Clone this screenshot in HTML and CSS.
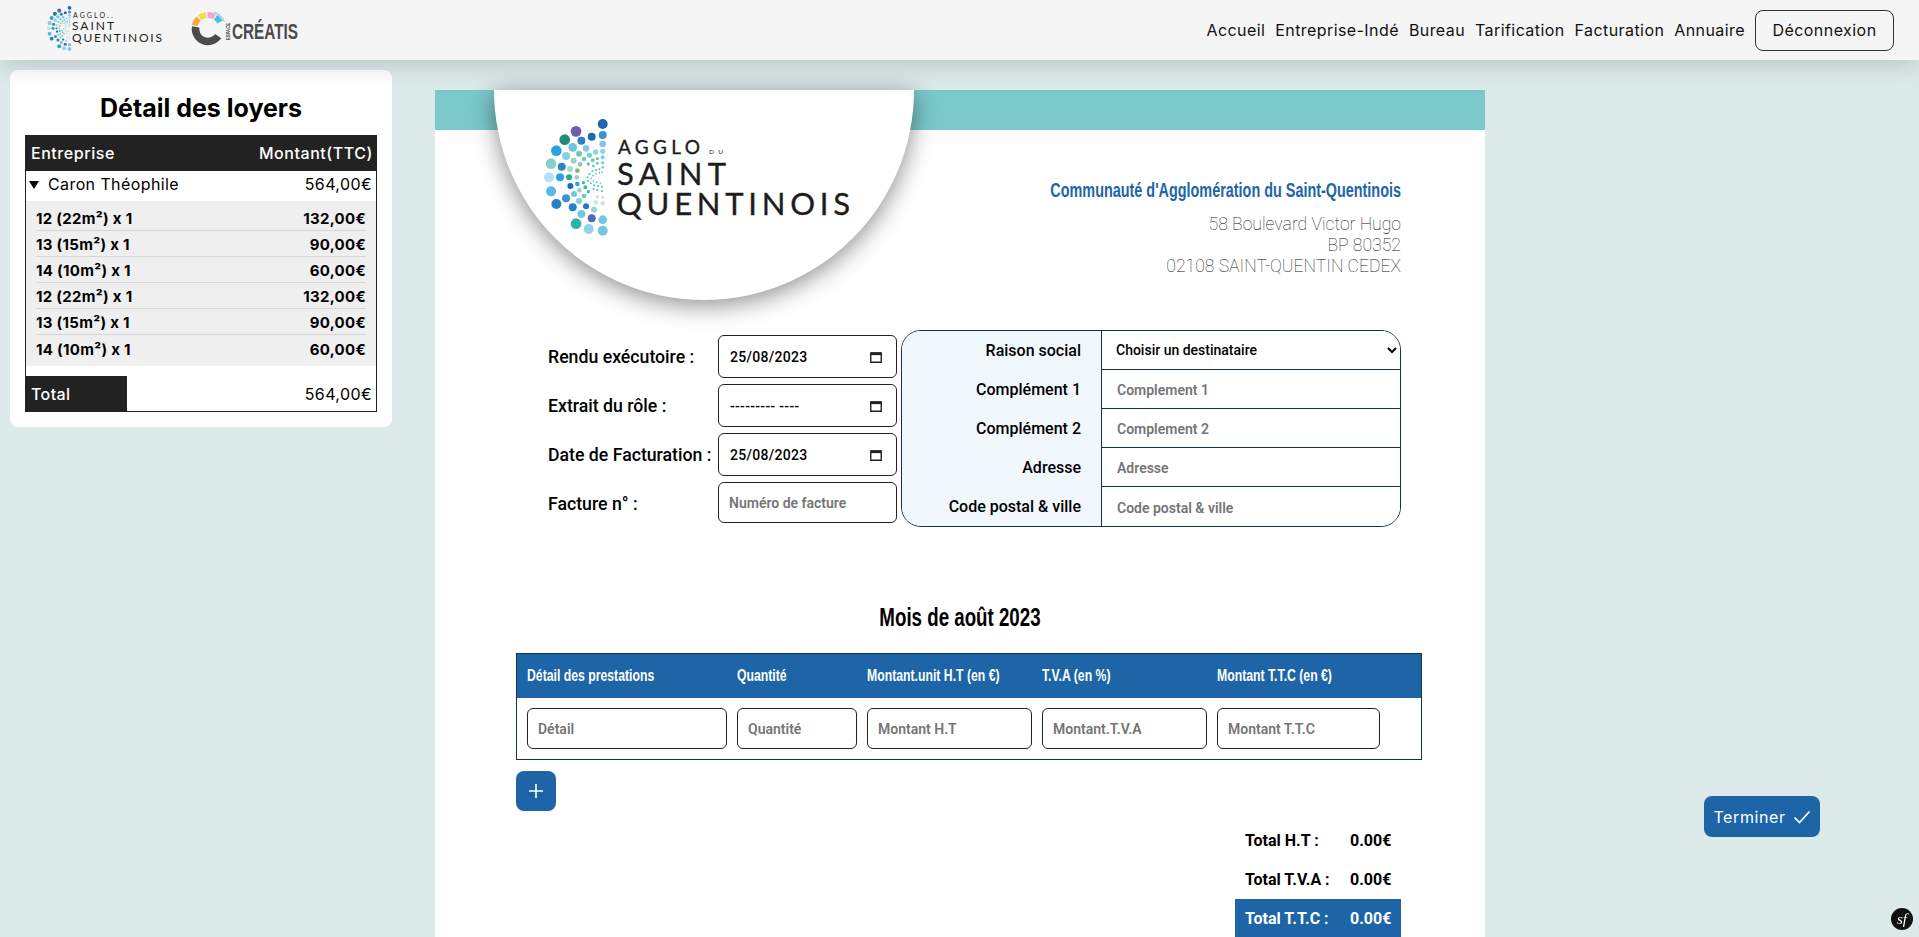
FILE: index.html
```html
<!DOCTYPE html>
<html lang="fr">
<head>
<meta charset="utf-8">
<title>Facturation</title>
<link rel="stylesheet" href="styles.css">
</head>
<body>
<svg class="defs" width="0" height="0" aria-hidden="true">
  <symbol id="dots" viewBox="185 110 200 366">
    <circle cx="368" cy="132" r="15" fill="#1d68b0"/><circle cx="368" cy="165" r="12" fill="#3d8fcf"/><circle cx="368" cy="192" r="10" fill="#8fc0e8"/><circle cx="368" cy="214" r="8" fill="#8fd3ee"/><circle cx="368" cy="232" r="6" fill="#7cd0c8"/><circle cx="368" cy="248" r="5" fill="#7cd0c8"/><circle cx="368" cy="262" r="4" fill="#7cd0c8"/>
    <circle cx="288" cy="154" r="16" fill="#6f5fae"/><circle cx="335" cy="170" r="12" fill="#1d6ab0"/><circle cx="304" cy="182" r="12" fill="#2c80c6"/><circle cx="254" cy="179" r="16" fill="#1f8a78"/><circle cx="278" cy="202" r="13" fill="#6cc6dc"/><circle cx="318" cy="205" r="10" fill="#8cc4ea"/><circle cx="347" cy="216" r="8" fill="#8dd6ea"/><circle cx="229" cy="212" r="16" fill="#2ba3e2"/><circle cx="297" cy="221" r="9" fill="#6cc9b6"/><circle cx="258" cy="228" r="12" fill="#87cfe8"/><circle cx="328" cy="226" r="8" fill="#7fd0d4"/><circle cx="312" cy="237" r="7" fill="#6fcab8"/><circle cx="352" cy="236" r="5" fill="#6fcab8"/><circle cx="281" cy="242" r="9" fill="#9ad4c0"/><circle cx="338" cy="241" r="6" fill="#6fcab8"/><circle cx="213" cy="251" r="16" fill="#86cfcb"/><circle cx="300" cy="253" r="7" fill="#80cca8"/><circle cx="245" cy="260" r="12" fill="#2f86c4"/><circle cx="325" cy="252" r="5" fill="#5fc4b8"/><circle cx="352" cy="250" r="4" fill="#5fc4b8"/><circle cx="270" cy="267" r="9" fill="#a8dcc8"/><circle cx="292" cy="272" r="7" fill="#7cc060"/><circle cx="340" cy="258" r="4" fill="#5fc4b8"/>
    <circle cx="207" cy="292" r="15" fill="#b8e0f8"/><circle cx="240" cy="292" r="12" fill="#2ba3e2"/><circle cx="267" cy="292" r="9" fill="#2fa88e"/><circle cx="290" cy="292" r="7" fill="#8fd0e8"/><circle cx="271" cy="318" r="9" fill="#1f6ab8"/><circle cx="292" cy="312" r="7" fill="#2ba3e2"/><circle cx="310" cy="308" r="5" fill="#3db8a8"/><circle cx="213" cy="334" r="15" fill="#5cb8e8"/><circle cx="258" cy="355" r="12" fill="#4090d0"/><circle cx="282" cy="342" r="9" fill="#70c8e8"/><circle cx="298" cy="331" r="7" fill="#9ad4c0"/><circle cx="316" cy="322" r="6" fill="#3db8a8"/><circle cx="229" cy="372" r="15" fill="#2880c0"/><circle cx="297" cy="363" r="9" fill="#80d0e0"/><circle cx="312" cy="348" r="7" fill="#70c8b8"/><circle cx="325" cy="335" r="5" fill="#3db8a8"/><circle cx="278" cy="382" r="12" fill="#2880c8"/><circle cx="318" cy="379" r="9" fill="#2878c0"/><circle cx="342" cy="389" r="9" fill="#90d8e8"/><circle cx="368" cy="370" r="7" fill="#c8e8e0"/><circle cx="347" cy="367" r="7" fill="#c8e8e0"/><circle cx="368" cy="352" r="5" fill="#c8e8e0"/><circle cx="352" cy="350" r="5" fill="#c8e8e0"/><circle cx="304" cy="402" r="12" fill="#70c8e0"/><circle cx="335" cy="415" r="12" fill="#5068b8"/><circle cx="368" cy="419" r="13" fill="#70c8e0"/><circle cx="288" cy="431" r="16" fill="#2cb4a0"/><circle cx="326" cy="447" r="15" fill="#90d4ec"/><circle cx="368" cy="452" r="15" fill="#70c8e0"/>
    <g fill="#45bfc0"><circle cx="358" cy="268" r="3"/><circle cx="348" cy="270" r="3"/><circle cx="337" cy="274" r="3"/><circle cx="328" cy="282" r="3"/><circle cx="322" cy="292" r="3"/><circle cx="324" cy="302" r="3"/><circle cx="332" cy="310" r="3"/><circle cx="342" cy="316" r="3"/><circle cx="354" cy="318" r="3"/><circle cx="366" cy="320" r="3"/><circle cx="358" cy="278" r="2.5"/><circle cx="348" cy="281" r="2.5"/><circle cx="339" cy="287" r="2.5"/><circle cx="334" cy="295" r="2.5"/><circle cx="340" cy="303" r="2.5"/><circle cx="350" cy="307" r="2.5"/><circle cx="361" cy="309" r="2.5"/><circle cx="366" cy="276" r="2.5"/><circle cx="352" cy="330" r="3"/><circle cx="340" cy="328" r="3"/><circle cx="366" cy="334" r="3"/></g>
  </symbol>
</svg>

<header class="topbar">
  <div class="brands">
    <svg class="brand-agglo" viewBox="0 0 118 50" role="img">
      <use href="#dots" x="0" y="0" width="25.700" height="47"/>
      <text class="lg-text" x="27" y="13.300" font-size="7" textLength="32" lengthAdjust="spacing">AGGLO</text>
      <text class="lg-text" x="61" y="13.300" font-size="2.600" textLength="6" lengthAdjust="spacing">DU</text>
      <text class="lg-text" x="26" y="25" font-size="12" textLength="42" lengthAdjust="spacing">SAINT</text>
      <text class="lg-text" x="26" y="36.700" font-size="12" textLength="90" lengthAdjust="spacing">QUENTINOIS</text>
    </svg>
    <svg class="brand-creatis" viewBox="0 0 110 44" role="img">
      <path d="M24.200 4.100A18 18 0 0 1 34.300 13.400" fill="none" stroke="#57c2dc" stroke-width="1"/>
      <path d="M4.500 17.400A14 14 0 0 1 8.600 10.600" fill="none" stroke="#f3a93c" stroke-width="6"/>
      <path d="M9.600 9.800A14 14 0 0 1 16.300 7.100" fill="none" stroke="#f7d84e" stroke-width="6"/>
      <path d="M17.500 7A14 14 0 0 1 24.600 8.600" fill="none" stroke="#f0a8c8" stroke-width="6"/>
      <path d="M25.600 9.300A14 14 0 0 1 30.100 14" fill="none" stroke="#45bfdf" stroke-width="6"/>
      <path d="M5.700 18.800A12.500 12.500 0 0 0 28.200 28.200" fill="none" stroke="#4b4b4e" stroke-width="7.500"/>
      <text class="cr-esp" transform="translate(40 32) rotate(-90)" textLength="17" lengthAdjust="spacingAndGlyphs">ESPACE</text>
      <text class="cr-name" x="42" y="30.500" textLength="66" lengthAdjust="spacingAndGlyphs">CRÉATIS</text>
    </svg>
  </div>
  <nav class="nav">
    <a class="nav-link">Accueil</a>
    <a class="nav-link">Entreprise-Indé</a>
    <a class="nav-link">Bureau</a>
    <a class="nav-link">Tarification</a>
    <a class="nav-link">Facturation</a>
    <a class="nav-link">Annuaire</a>
    <button class="logout" type="button">Déconnexion</button>
  </nav>
</header>

<div class="page">
  <aside class="card">
    <h2 class="card-title">Détail des loyers</h2>
    <div class="rent">
      <div class="rent-head"><span>Entreprise</span><span>Montant(TTC)</span></div>
      <div class="rent-company"><span class="rent-name"><i class="caret"></i>Caron Théophile</span><span>564,00€</span></div>
      <div class="rent-lines">
        <div class="rent-line"><span>12 (22m²) x 1</span><span>132,00€</span></div>
        <div class="rent-line"><span>13 (15m²) x 1</span><span>90,00€</span></div>
        <div class="rent-line"><span>14 (10m²) x 1</span><span>60,00€</span></div>
        <div class="rent-line"><span>12 (22m²) x 1</span><span>132,00€</span></div>
        <div class="rent-line"><span>13 (15m²) x 1</span><span>90,00€</span></div>
        <div class="rent-line"><span>14 (10m²) x 1</span><span>60,00€</span></div>
      </div>
      <div class="rent-total"><span class="rent-total-label">Total</span><span class="rent-total-value">564,00€</span></div>
    </div>
  </aside>

  <main class="sheet">
    <div class="banner"></div>
    <div class="disc">
      <svg class="disc-logo" viewBox="0 0 306 118" role="img">
        <use href="#dots" x="-2.300" y="-2.300" width="66.700" height="122"/>
        <text class="lg-text lg-big" x="74" y="35" font-size="19" textLength="82" lengthAdjust="spacing">AGGLO</text>
        <text class="lg-text" x="165" y="35" font-size="6.500" textLength="14" lengthAdjust="spacing">DU</text>
        <text class="lg-text lg-big" x="73" y="66" font-size="31" textLength="109" lengthAdjust="spacing">SAINT</text>
        <text class="lg-text lg-big" x="73" y="96" font-size="31" textLength="233" lengthAdjust="spacing">QUENTINOIS</text>
      </svg>
    </div>

    <section class="company">
      <h3 class="company-name"><span class="cond cond-right">Communauté d'Agglomération du Saint-Quentinois</span></h3>
      <p class="company-addr">58 Boulevard Victor Hugo<br>BP 80352<br>02108 SAINT-QUENTIN CEDEX</p>
    </section>

    <section class="form-row">
      <div class="meta">
        <label class="meta-label">Rendu exécutoire :</label>
        <div class="field"><input class="field-input date-text" type="text" value="25/08/2023"><svg class="cal" viewBox="0 0 12 12"><path d="M1.500 3.500h9v7h-9z" fill="none" stroke="#222" stroke-width="1.200"/><path d="M1 1.800h10v2.600h-10z" fill="#222"/></svg></div>
        <label class="meta-label">Extrait du rôle :</label>
        <div class="field"><input class="field-input date-text" type="text" value="--------- ----"><svg class="cal" viewBox="0 0 12 12"><path d="M1.500 3.500h9v7h-9z" fill="none" stroke="#222" stroke-width="1.200"/><path d="M1 1.800h10v2.600h-10z" fill="#222"/></svg></div>
        <label class="meta-label">Date de Facturation :</label>
        <div class="field"><input class="field-input date-text" type="text" value="25/08/2023"><svg class="cal" viewBox="0 0 12 12"><path d="M1.500 3.500h9v7h-9z" fill="none" stroke="#222" stroke-width="1.200"/><path d="M1 1.800h10v2.600h-10z" fill="#222"/></svg></div>
        <label class="meta-label">Facture n° :</label>
        <div class="field field-last"><input class="field-input" type="text" placeholder="Numéro de facture"></div>
      </div>
      <div class="recipient">
        <label class="rc-label">Raison social</label>
        <div class="rc-cell"><select class="rc-select"><option>Choisir un destinataire</option></select></div>
        <label class="rc-label">Complément 1</label>
        <div class="rc-cell"><input class="rc-input" type="text" placeholder="Complement 1"></div>
        <label class="rc-label">Complément 2</label>
        <div class="rc-cell"><input class="rc-input" type="text" placeholder="Complement 2"></div>
        <label class="rc-label">Adresse</label>
        <div class="rc-cell"><input class="rc-input" type="text" placeholder="Adresse"></div>
        <label class="rc-label">Code postal &amp; ville</label>
        <div class="rc-cell"><input class="rc-input" type="text" placeholder="Code postal &amp; ville"></div>
      </div>
    </section>

    <h2 class="month"><span class="cond cond-center">Mois de août 2023</span></h2>

    <section class="lines">
      <div class="lines-grid lines-head">
        <span class="cond cond-left">Détail des prestations</span><span class="cond cond-left">Quantité</span><span class="cond cond-left">Montant.unit H.T (en €)</span><span class="cond cond-left">T.V.A (en %)</span><span class="cond cond-left">Montant T.T.C (en €)</span>
      </div>
      <div class="lines-grid lines-row">
        <input class="field-input" type="text" placeholder="Détail">
        <input class="field-input" type="text" placeholder="Quantité">
        <input class="field-input" type="text" placeholder="Montant H.T">
        <input class="field-input" type="text" placeholder="Montant.T.V.A">
        <input class="field-input" type="text" placeholder="Montant T.T.C">
      </div>
    </section>

    <button class="add" type="button" aria-label="Ajouter"><svg viewBox="0 0 16 16" width="16" height="16"><path d="M8 1v14M1 8h14" stroke="#fff" stroke-width="1.600" fill="none"/></svg></button>

    <section class="totals">
      <div class="total-row"><span>Total H.T :</span><span>0.00€</span></div>
      <div class="total-row"><span>Total T.V.A :</span><span>0.00€</span></div>
      <div class="total-row total-main"><span>Total T.T.C :</span><span>0.00€</span></div>
    </section>
  </main>
</div>

<button class="finish" type="button">Terminer <svg viewBox="0 0 18 14" width="18" height="14"><path d="M1.500 7.500l5 5L16.500 1.500" stroke="#fff" stroke-width="1.700" fill="none"/></svg></button>
<div class="sf"><span>sf</span></div>
</body>
</html>
```

FILE: styles.css
```css
* { box-sizing: border-box; }
html, body { margin: 0; padding: 0; height: 937px; overflow: hidden; }
body { background: #ddeaea; font-family: "Inter", "Liberation Sans", sans-serif; color: #000; }
.defs { position: absolute; }

.cond { display: inline-block; white-space: nowrap; font-family: "Liberation Sans", sans-serif; font-weight: 700; transform: scaleX(.72); }
.cond-left { transform-origin: left center; }
.cond-right { transform-origin: right center; }
.cond-center { transform-origin: center center; }

.topbar { position: relative; z-index: 3; height: 60px; background: #f5f5f5; box-shadow: 0 0 30px rgba(0,0,0,.22); display: flex; justify-content: space-between; align-items: center; padding: 0 25px 0 46px; }
.brands { display: flex; align-items: center; gap: 26px; }
.brand-agglo { width: 118px; height: 50px; display: block; }
.brand-creatis { width: 110px; height: 44px; display: block; }
.lg-text { font-family: "Lato", sans-serif; fill: #1d1d1b; }
.lg-big { stroke: #1d1d1b; stroke-width: .35px; }
.cr-esp { font-family: "Liberation Sans", sans-serif; font-size: 4.500px; font-weight: 700; fill: #4b4b4e; }
.cr-name { font-family: "Liberation Sans", sans-serif; font-size: 22px; font-weight: 700; fill: #4b4b4e; }

.nav { display: flex; align-items: center; gap: 10px; }
.nav-link { font-size: 16px; letter-spacing: .42px; color: #111; white-space: nowrap; }
.logout { width: 139px; height: 41px; border: 1px solid #333; border-radius: 8px; background: #f5f5f5; font: 16px "Inter", sans-serif; letter-spacing: .45px; color: #111; padding: 0; }

.page { display: flex; align-items: flex-start; padding-left: 10px; }
.card { margin-top: 10px; width: 382px; height: 357px; background: #fff; border-radius: 8px; padding: 0 15px; }
.card-title { margin: 21px 0 10px; height: 34px; line-height: 34px; text-align: center; font-size: 25px; font-weight: 700; }
.rent { border: 1px solid #222; font-size: 16px; letter-spacing: .4px; height: 277px; }
.rent-head { margin: -1px -1px 0; height: 36px; background: #222; color: #fff; display: flex; justify-content: space-between; align-items: center; padding: 0 4px 0 6px; font-weight: 500; letter-spacing: .55px; }
.rent-company { height: 30px; display: flex; justify-content: space-between; align-items: center; padding: 0 4px 5px 3px; }
.rent-name { display: flex; align-items: center; }
.caret { width: 0; height: 0; border: 5px solid transparent; border-top: 8px solid #000; border-bottom: 0; margin: 2px 9px 0 0; }
.rent-lines { background: #efefef; height: 165px; padding: 4px 10px 0; }
.rent-line { height: 26px; display: flex; justify-content: space-between; align-items: center; border-bottom: 1px solid #d6d6d6; padding-top: 2px; font-weight: 700; font-size: 15px; letter-spacing: .3px; }
.rent-line:last-child { border-bottom: 0; }
.rent-total { margin: 10px 0 0 -1px; height: 35px; display: flex; justify-content: space-between; align-items: center; padding-right: 4px; }
.rent-total-label { width: 102px; height: 36px; background: #222; color: #fff; display: flex; align-items: center; padding-left: 6px; font-weight: 500; }

.sheet { position: relative; margin: 30px 0 0 43px; width: 1050px; height: 847px; background: #fff; }
.banner { height: 40px; background: #7bc8cb; }
.disc { position: absolute; left: 59px; top: 0; width: 420px; height: 210px; background: #fff; border-radius: 0 0 210px 210px; box-shadow: 0 5px 24px rgba(0,0,0,.45); padding: 29px 0 0 50px; }
.disc-logo { display: block; width: 306px; height: 118px; overflow: visible; }

.company { padding: 48px 84px 0 0; text-align: right; height: 200px; }
.company-name { margin: 0; font-size: 20px; line-height: 24px; color: #1d65a6; }
.company-addr { margin: 12px 0 0; font-family: "Roboto", sans-serif; font-weight: 100; font-size: 17.600px; line-height: 21px; color: #111; }

.form-row { display: flex; padding: 0 84px 0 113px; align-items: flex-start; height: 197px; }
.meta { display: grid; grid-template-columns: 170px 179px; grid-auto-rows: 43px; row-gap: 6px; padding-top: 5px; }
.meta-label { font-family: "Roboto", sans-serif; font-weight: 500; font-size: 17.700px; display: flex; align-items: center; white-space: nowrap; }
.field { position: relative; height: 43px; }
.field-last { height: 41px; }
.field-input { width: 100%; height: 100%; border: 1px solid #222; border-radius: 6px; background: #fff; padding: 0 10px; font: 500 14px "Roboto", sans-serif; color: #000; outline: 0; display: block; }
.field-input::placeholder, .rc-input::placeholder { color: #757575; opacity: 1; font-weight: 600; }
.date-text { letter-spacing: .3px; padding-left: 11px; }
.cal { position: absolute; right: 14px; top: 15px; width: 14px; height: 14px; }

.recipient { margin-left: 4px; width: 500px; height: 197px; border: 1px solid #14324f; border-radius: 20px; overflow: hidden; display: grid; grid-template-columns: 200px 1fr; grid-template-rows: 39px 39px 39px 39px 1fr; }
.rc-label { background: #f0f7fd; border-right: 1px solid #14324f; font: 500 16px "Roboto", sans-serif; display: flex; align-items: center; justify-content: flex-end; padding-right: 20px; }
.rc-cell { border-bottom: 1px solid #14324f; }
.rc-cell:last-child { border-bottom: 0; }
.rc-select { width: 100%; height: 100%; border: 0; background: #fff; font: 500 14px "Roboto", sans-serif; color: #000; padding-left: 10px; outline: 0; }
.rc-input { width: 100%; height: 100%; border: 0; padding: 2px 15px 0; font: 500 14px "Roboto", sans-serif; outline: 0; display: block; }

.month { margin: 0; height: 126px; padding-top: 74px; line-height: 32px; text-align: center; font-size: 26px; }

.lines { margin: 0 63px 0 81px; border: 1px solid #14324f; }
.lines-grid { display: grid; grid-template-columns: 200px 120px 165px 165px 163px; column-gap: 10px; padding: 0 10px; }
.lines-head { height: 44px; background: #1d65a6; color: #fff; align-items: center; font-size: 17px; }
.lines-row { height: 61px; align-items: center; }
.lines-row .field-input { height: 41px; }

.add { display: flex; align-items: center; justify-content: center; margin: 11px 0 0 81px; width: 40px; height: 40px; border: 0; border-radius: 8px; background: #1d65a6; padding: 0; }

.totals { margin: 10px 84px 0 auto; width: 166px; }
.total-row { height: 39px; padding-left: 10px; display: grid; grid-template-columns: 105px 1fr; align-items: center; font: 700 16px "Roboto", sans-serif; }
.total-main { background: #1d65a6; color: #fff; }

.finish { position: fixed; left: 1704px; top: 796px; width: 116px; height: 41px; border: 0; border-radius: 8px; background: #1d65a6; color: #fff; font: 16px "Inter", sans-serif; letter-spacing: .6px; display: flex; align-items: center; justify-content: center; gap: 7px; padding: 0; }
.sf { position: fixed; left: 1891px; top: 908px; width: 22px; height: 22px; border-radius: 50%; background: #111; color: #fff; display: flex; align-items: center; justify-content: center; font: italic 15px "Liberation Serif", serif; }
```
